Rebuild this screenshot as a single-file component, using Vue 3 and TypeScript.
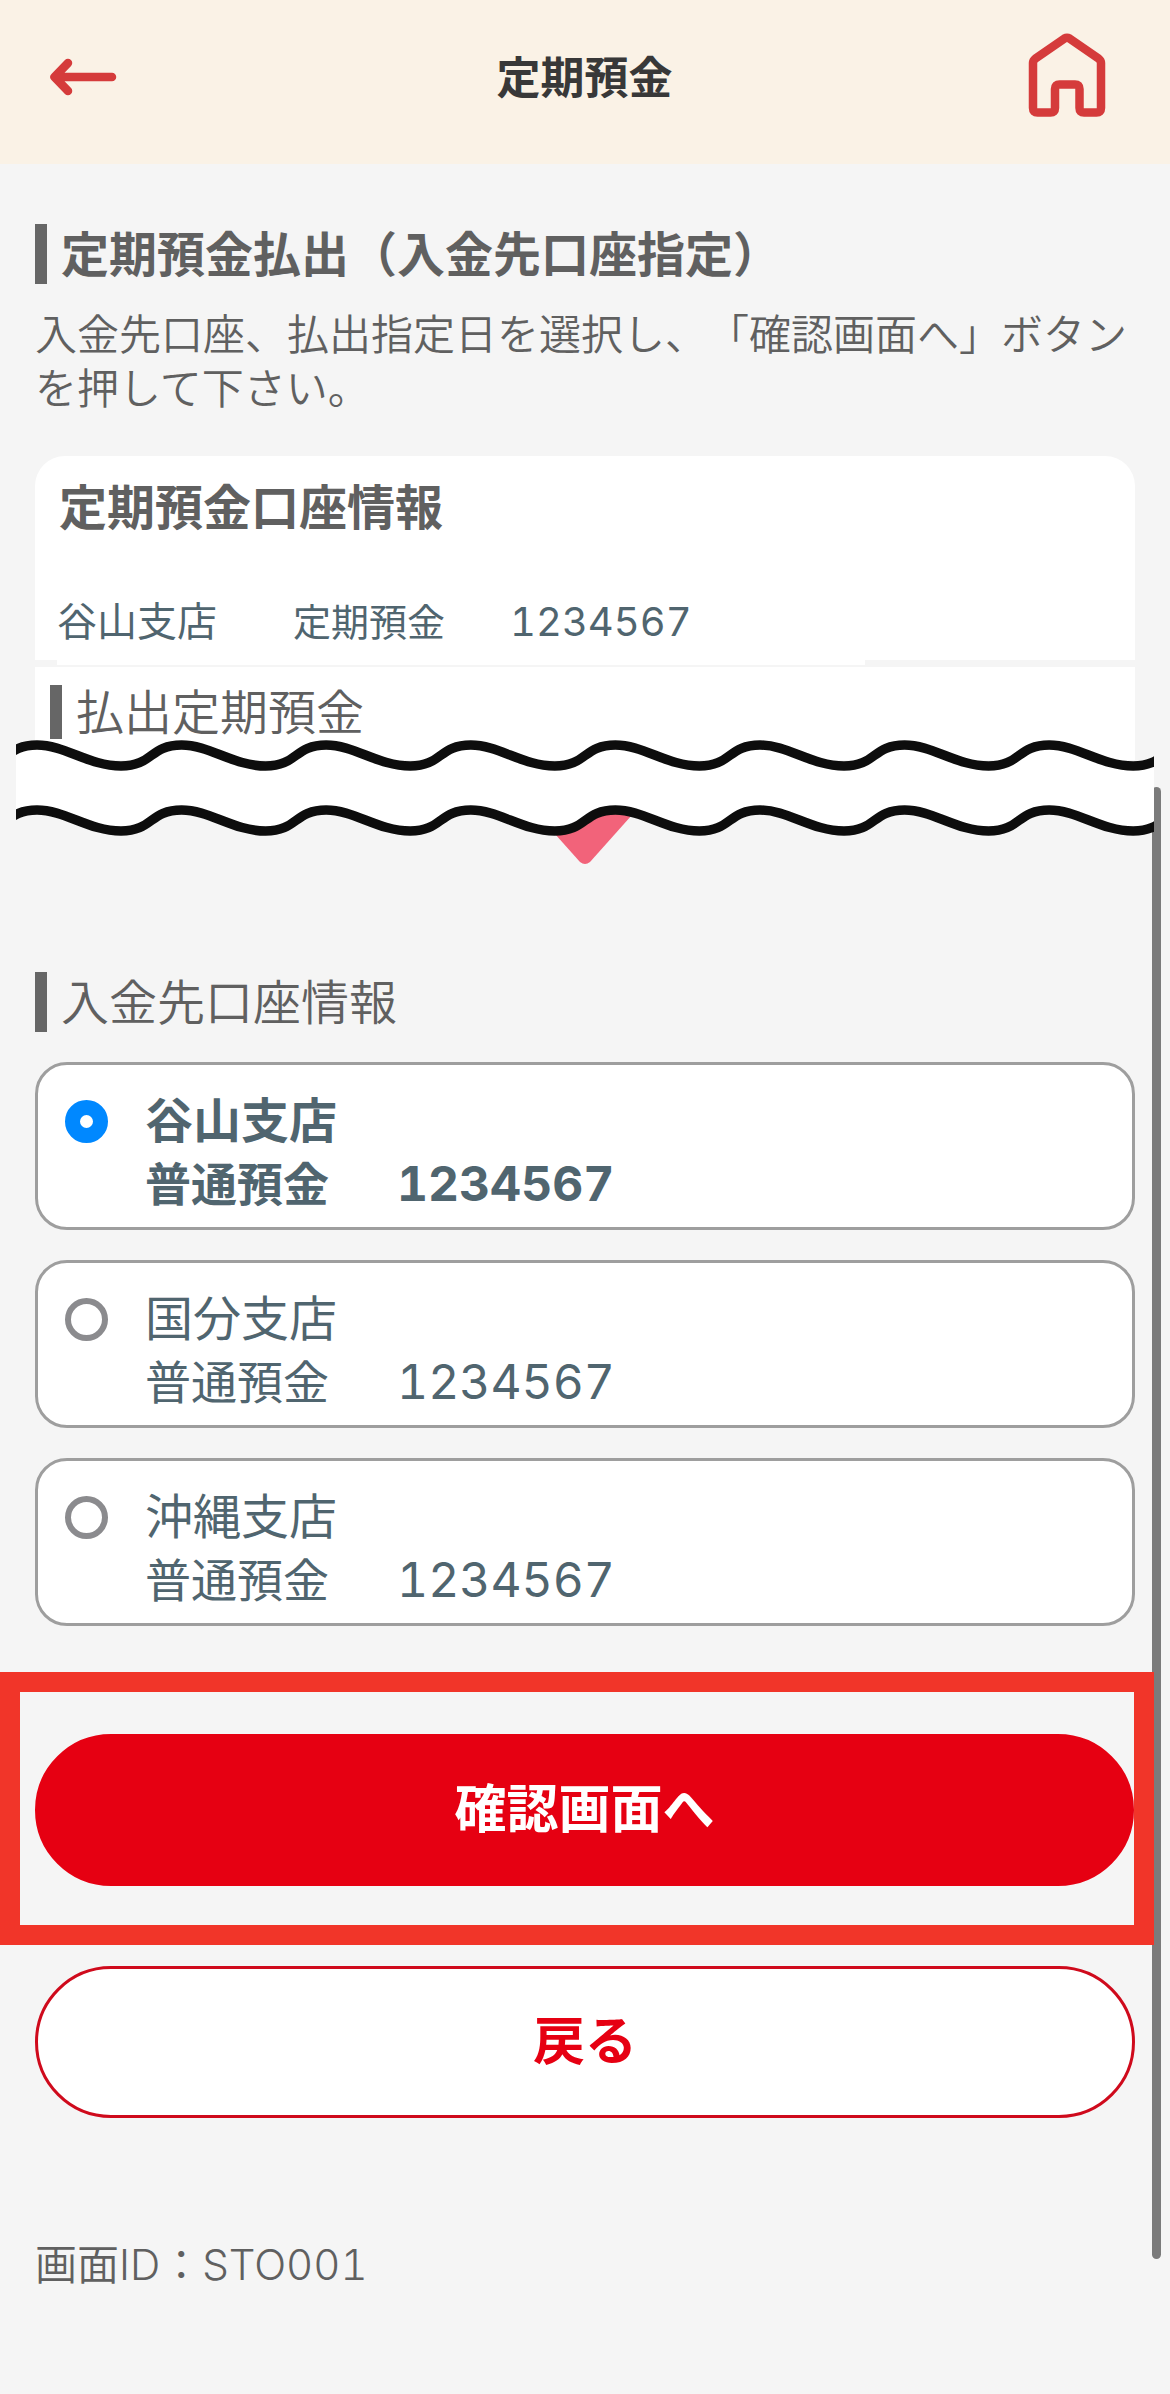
<script setup lang="ts">
import { ref } from 'vue'

interface Account {
  id: string
  branch: string
  kind: string
  number: string
}

const accounts: Account[] = [
  { id: 'taniyama', branch: '谷山支店', kind: '普通預金', number: '1234567' },
  { id: 'kokubu', branch: '国分支店', kind: '普通預金', number: '1234567' },
  { id: 'okinawa', branch: '沖縄支店', kind: '普通預金', number: '1234567' },
]
const selected = ref('taniyama')

// One wave line, left to right, with its crests at height `y`.
function wave(y: number): string {
  const period = 144.6
  let d = `M-39.6 ${y + 21}`
  for (let i = 0; i < 9; i++) {
    const trough = -39.6 + i * period
    const crest = trough + 60.6
    const next = trough + period
    d += ` C${trough + 32} ${y + 21} ${crest - 32} ${y} ${crest} ${y}`
    d += ` C${crest + 28} ${y} ${next - 32} ${y + 21} ${next} ${y + 21}`
  }
  return d
}
const upper = wave(5)
const lower = wave(70)
const paper = `${upper} V91 H-39.6 Z`
const belowLower = `${lower} V120 H-39.6 Z`
</script>

<template>
  <div class="page">
    <header class="bar">
      <button class="icon-btn back" type="button" aria-label="前の画面">
        <svg width="68" height="38" viewBox="0 0 68 38" fill="none" stroke="#d53b3b" stroke-width="8.500" stroke-linecap="round" stroke-linejoin="round">
          <path d="M63 19H6M19 5L5.500 19L19 33" />
        </svg>
      </button>
      <h1 class="bar-title">定期預金</h1>
      <a class="icon-btn" href="#" aria-label="ホーム">
        <svg width="78" height="84" viewBox="0 0 78 84" fill="none" stroke="#d53b3b" stroke-width="8.500" stroke-linejoin="round">
          <path d="M36.500 5.500Q39 4 41.500 5.500L70.500 25.500Q73 27.500 73 30V75Q73 79.500 68.500 79.500H56Q51.500 79.500 51.500 75V56Q51.500 51.500 47 51.500H31.500Q27 51.500 27 56V75Q27 79.500 22.500 79.500H9.500Q5 79.500 5 75V30Q5 27.500 7.500 25.500Z" />
        </svg>
      </a>
    </header>

    <main class="content">
      <h2 class="heading strong">定期預金払出（入金先口座指定）</h2>
      <p class="lead">入金先口座、払出指定日を選択し、「確認画面へ」ボタンを押して下さい。</p>

      <section class="info">
        <h3 class="info-title">定期預金口座情報</h3>
        <div class="info-row">
          <span>谷山支店</span>
          <span class="kind">定期預金</span>
          <span class="digits">1234567</span>
        </div>
      </section>
      <section class="payout">
        <h2 class="heading short">払出定期預金</h2>
      </section>

      <svg class="tear" viewBox="0 0 1138 96" preserveAspectRatio="none" aria-hidden="true">
        <defs>
          <mask id="above-lower">
            <rect width="1138" height="96" fill="#fff" />
            <path :d="belowLower" fill="#000" />
          </mask>
        </defs>
        <path :d="paper" fill="#fff" mask="url(#above-lower)" />
        <g fill="none" stroke="#0d0d0d" stroke-width="9.500">
          <path :d="upper" />
          <path :d="lower" />
        </g>
      </svg>
      <svg class="pointer" width="110" height="58" viewBox="0 0 110 58" aria-hidden="true">
        <path d="M0 0H110L60 56Q55 60 50 56Z" fill="#f2637a" />
      </svg>

      <h2 id="dest" class="heading dest">入金先口座情報</h2>
      <div class="options" role="radiogroup" aria-labelledby="dest">
        <label v-for="a in accounts" :key="a.id" class="option" :class="{ on: selected === a.id }">
          <input v-model="selected" class="radio" type="radio" name="account" :value="a.id" />
          <span class="lines">
            <span class="branch">{{ a.branch }}</span>
            <span class="detail">
              <span>{{ a.kind }}</span>
              <span class="digits">{{ a.number }}</span>
            </span>
          </span>
        </label>
      </div>

      <div class="frame">
        <button class="btn primary" type="button">確認画面へ</button>
      </div>
      <button class="btn secondary" type="button">戻る</button>

      <p class="screen-id">画面ID：STO001</p>
    </main>
    <div class="scrollbar" aria-hidden="true"></div>
  </div>
</template>

<style>
body {
  margin: 0;
  background: #f5f5f5;
}
</style>

<style scoped>
.page {
  position: relative;
  min-height: 100vh;
  background: #f5f5f5;
  color: #606060;
  font-family: "Noto Sans CJK JP", sans-serif;
  font-size: 42px;
  line-height: 54px;
  font-weight: 350;
  text-spacing-trim: space-all;
}
h1, h2, h3, p {
  margin: 0;
}
.bar {
  display: flex;
  justify-content: space-between;
  align-items: flex-start;
  box-sizing: border-box;
  height: 164px;
  padding: 33px 64px 0 49px;
  background: #faf2e6;
}
.bar-title {
  flex: 1;
  padding: 15px 0 0 24px;
  text-align: center;
  color: #383838;
  font-size: 44px;
  font-weight: 700;
}
.icon-btn {
  display: flex;
  align-items: center;
  height: 84px;
  padding: 0;
  border: 0;
  background: none;
}
.back {
  height: 88px;
}
.content {
  padding: 60px 35px 102px;
}
.heading {
  padding: 0 0 6px 14px;
  border-left: 12px solid #666;
  font-size: 48px;
  line-height: 54px;
  font-weight: 350;
}
.heading.strong {
  font-weight: 700;
}
.heading.short {
  line-height: 48px;
}
.lead {
  margin-top: 21px;
}
.info {
  display: flow-root;
  margin-top: 43px;
  padding: 21px 0 0 22px;
  border-radius: 30px 30px 0 0;
  background: #fff;
}
.info-title {
  padding-left: 2px;
  font-size: 48px;
  font-weight: 700;
}
.info-row {
  position: relative;
  z-index: 1;
  display: grid;
  grid-template-columns: 236px 217px auto;
  align-items: baseline;
  height: 73px;
  margin: 61px 270px -5px 0;
  background: #fff;
  color: #50656f;
  font-size: 40px;
  font-weight: 400;
}
.info-row .kind {
  font-size: 38px;
}
.digits {
  font-family: Inter, "Noto Sans CJK JP", sans-serif;
  font-variant-numeric: tabular-nums;
}
.payout {
  margin-top: 7px;
  padding: 18px 15px 21px;
  background: #fff;
}
.tear {
  position: relative;
  z-index: 2;
  display: block;
  width: calc(100% + 38px);
  height: 96px;
  margin: -20px -19px 0;
}
.pointer {
  display: block;
  margin: -30px auto 0;
}
.dest {
  margin-top: 108px;
}
.options {
  display: flex;
  flex-direction: column;
  gap: 30px;
  margin-top: 30px;
}
.option {
  display: flex;
  align-items: flex-start;
  gap: 37px;
  padding: 20px 27px 14px;
  border: 3px solid #9e9e9e;
  border-radius: 32px;
  background: #fff;
  color: #50656f;
  font-size: 48px;
  line-height: 64px;
  font-weight: 400;
}
.option.on {
  font-weight: 700;
}
.radio {
  appearance: none;
  flex: none;
  box-sizing: border-box;
  width: 43px;
  height: 43px;
  margin: 15px 0 0;
  border: 6px solid #8b8b8e;
  border-radius: 50%;
  background: #fff;
}
.radio:checked {
  border: 15px solid #0088ff;
}
.lines {
  display: flex;
  flex-direction: column;
}
.detail {
  display: flex;
  align-items: baseline;
  gap: 68px;
  height: 64px;
  font-size: 46px;
}
.detail .digits {
  font-size: 48px;
}
.frame {
  position: relative;
  z-index: 2;
  margin: 46px -19px 21px -35px;
  padding: 42px 0 39px 15px;
  border: 20px solid #f13529;
}
.btn {
  display: block;
  box-sizing: border-box;
  width: 100%;
  height: 152px;
  padding: 0 0 8px;
  border: 3px solid #e60012;
  border-radius: 76px;
  font-family: inherit;
  font-size: 52px;
  line-height: 62px;
  font-weight: 700;
}
.primary {
  background: #e60012;
  color: #fff;
}
.secondary {
  border-color: #cf0a1c;
  background: #fff;
  color: #e60012;
}
.screen-id {
  margin-top: 120px;
  font-family: Inter, "Noto Sans CJK JP", sans-serif;
  font-variant-numeric: tabular-nums;
}
.scrollbar {
  position: absolute;
  z-index: 1;
  top: 787px;
  right: 9px;
  bottom: 135px;
  width: 9px;
  border-radius: 5px;
  background: #7b7b7b;
}
</style>
